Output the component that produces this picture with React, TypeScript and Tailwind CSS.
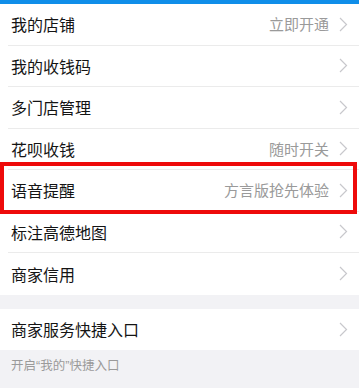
import React from 'react';

type Item = { label: string; hint?: string; highlight?: boolean };

const items: Item[] = [
  { label: '我的店铺', hint: '立即开通' },
  { label: '我的收钱码' },
  { label: '多门店管理' },
  { label: '花呗收钱', hint: '随时开关' },
  { label: '语音提醒', hint: '方言版抢先体验', highlight: true },
  { label: '标注高德地图' },
  { label: '商家信用' },
];

function Chevron() {
  return (
    <svg width="9" height="15" viewBox="0 0 9 15" className="ml-[10px] shrink-0">
      <path d="M1 1l6.5 6.5L1 14" fill="none" stroke="#c8c8cc" strokeWidth="1.2" />
    </svg>
  );
}

function Row({ item, last }: { item: Item; last?: boolean }) {
  return (
    <div className="relative h-[41.5px] pl-2">
      <div className={`flex h-full items-center pl-[3px] pr-[11px] ${last ? '' : 'border-b border-[#ebebeb]'}`}>
        <span className="text-[16px] text-[#141414]">{item.label}</span>
        <span className="ml-auto text-[15px] text-[#9a9a9a]">{item.hint}</span>
        <Chevron />
      </div>
      {item.highlight && (
        <div className="pointer-events-none absolute left-0 right-[2px] top-[-8px] bottom-[-2px] border-4 border-[#ee0a0a]" />
      )}
    </div>
  );
}

export default function App() {
  const q = 'font-["Liberation_Sans"]';
  return (
    <div className="h-[388px] w-[359px] overflow-hidden bg-[#f2f2f5]" style={{ fontFamily: '"Noto Sans CJK SC", "Noto Sans", sans-serif' }}>
      <div className="h-1 bg-[#108ee9]" />
      <div className="bg-white">
        {items.map((item, i) => (
          <Row key={item.label} item={item} last={i === items.length - 1} />
        ))}
      </div>
      <div className="mt-[14px] bg-white">
        <Row item={{ label: '商家服务快捷入口' }} last />
      </div>
      <div className="pl-[11px] pt-[6px] text-[12.5px] text-[#9a9a9a]">
        开启<span className={q}>“</span>我的<span className={q}>”</span>快捷入口
      </div>
    </div>
  );
}
